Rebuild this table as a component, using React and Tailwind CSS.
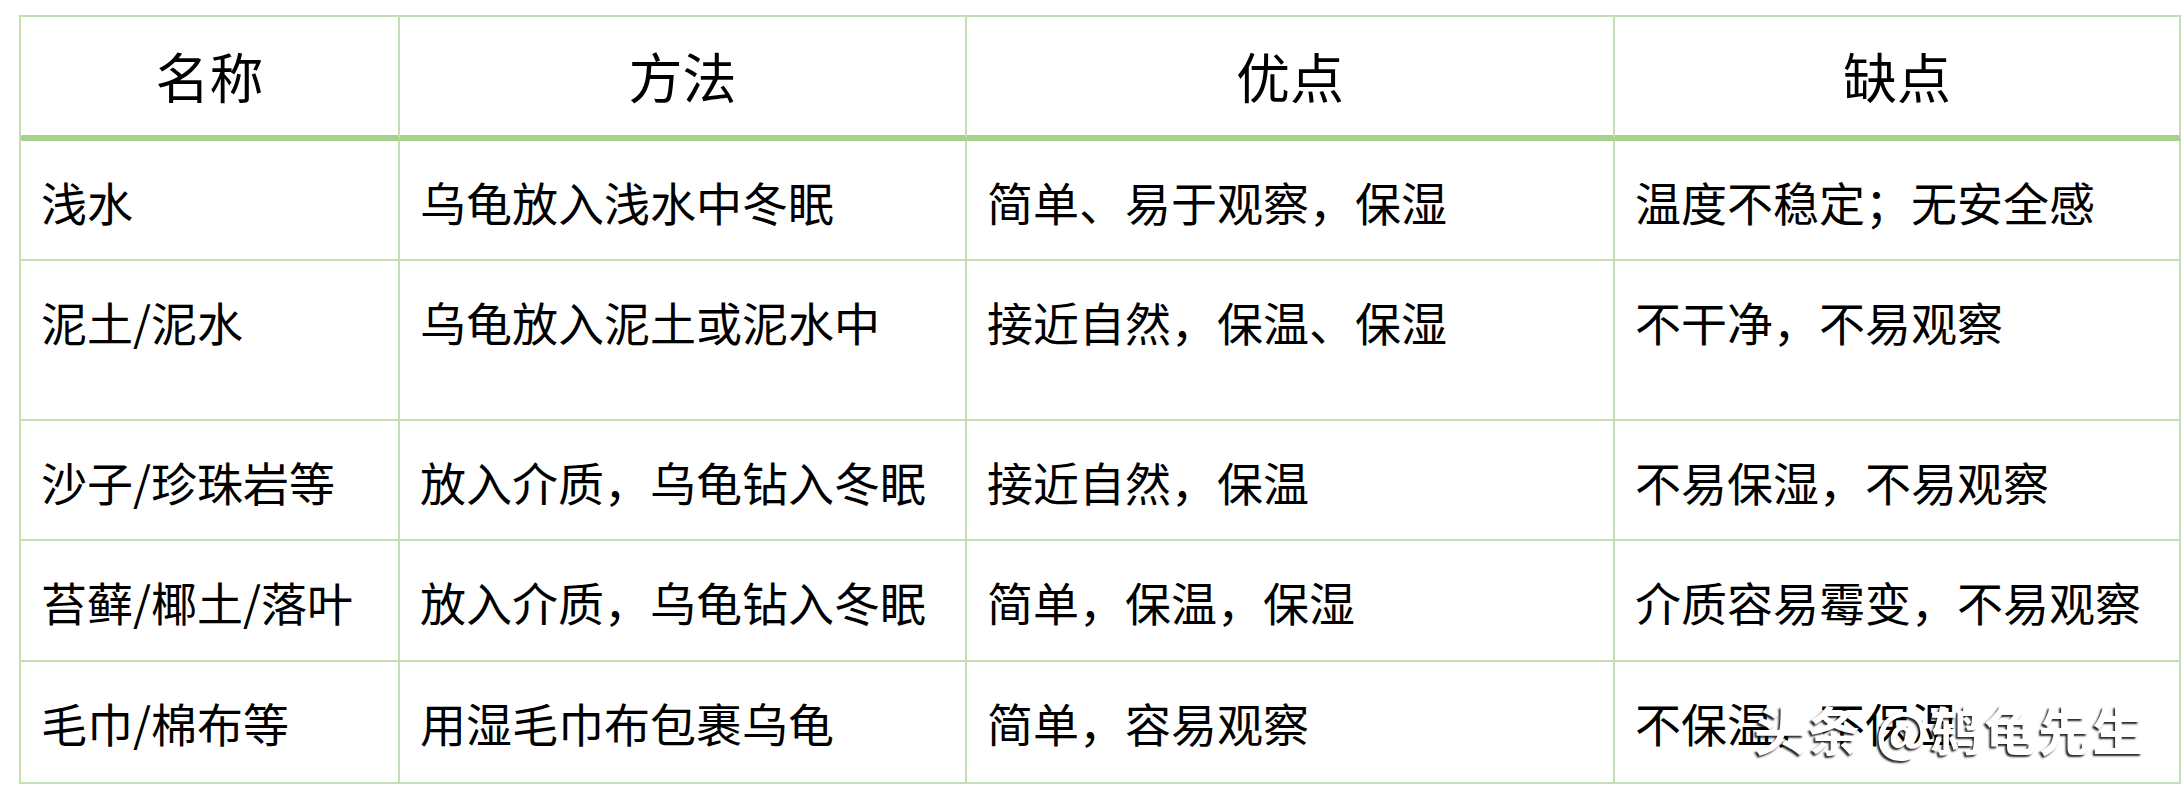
import React from 'react';

const rows = [
  { name: '浅水', method: '乌龟放入浅水中冬眠', pros: '简单、易于观察，保湿', cons: '温度不稳定；无安全感', h: 'h-[120px]' },
  { name: '泥土/泥水', method: '乌龟放入泥土或泥水中', pros: '接近自然，保温、保湿', cons: '不干净，不易观察', h: 'h-[160px]' },
  { name: '沙子/珍珠岩等', method: '放入介质，乌龟钻入冬眠', pros: '接近自然，保温', cons: '不易保湿，不易观察', h: 'h-[120px]' },
  { name: '苔藓/椰土/落叶', method: '放入介质，乌龟钻入冬眠', pros: '简单，保温，保湿', cons: '介质容易霉变，不易观察', h: 'h-[121px]' },
  { name: '毛巾/棉布等', method: '用湿毛巾布包裹乌龟', pros: '简单，容易观察', cons: '不保温，不保湿', h: 'h-[122px]' },
];

const headers = ['名称', '方法', '优点', '缺点'];

const App = () => {
  return (
    <div className="min-h-[794px] w-full bg-white pt-[15px] pl-[19px] font-['Noto_Sans_CJK_SC','Noto_Sans',sans-serif] text-black">
      <div className="relative w-[2162px] border-l-2 border-t-2 border-[#c5dfb4]">
        {/* Header */}
        <div className="grid grid-cols-[379px_567px_648px_566px]">
          {headers.map((title) => (
            <div
              key={title}
              className="flex h-[124px] items-center justify-center border-r-2 border-b-[6px] border-r-[#c5dfb4] border-b-[#a9d18e] text-[54px] leading-none"
            >
              {title}
            </div>
          ))}
        </div>

        {/* Body rows */}
        {rows.map((row) => (
          <div key={row.name} className="grid grid-cols-[379px_567px_648px_566px]">
            {[row.name, row.method, row.pros, row.cons].map((text, idx) => (
              <div
                key={idx}
                className={`${row.h} border-r-2 border-b-2 border-[#c5dfb4] pl-[20px] pt-[30px] text-[46px] leading-[60px] whitespace-nowrap`}
              >
                {text}
              </div>
            ))}
          </div>
        ))}

        {/* Watermark */}
        <div className="absolute left-[1733px] top-[686px] whitespace-nowrap text-[52px] leading-none tracking-[2px] font-bold text-white [text-shadow:-2px_2px_2px_rgba(0,0,0,0.85)]">
          头条 @鸫龟先生
        </div>
      </div>
    </div>
  );
};

export default App;
